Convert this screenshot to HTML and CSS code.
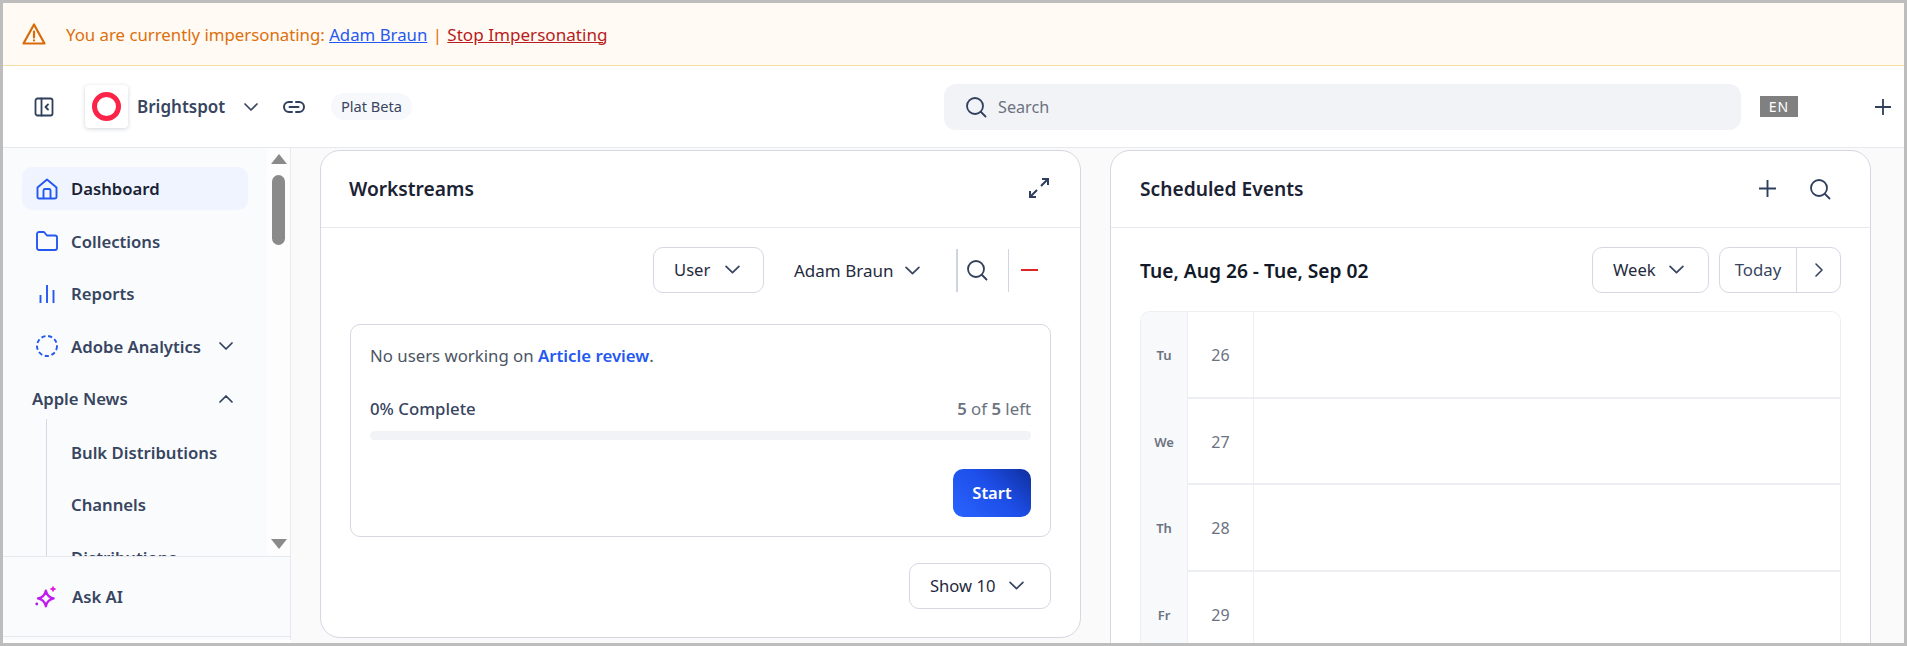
FILE: index.html
```html
<!DOCTYPE html>
<html lang="en">
<head>
<meta charset="utf-8">
<title>Dashboard</title>
<link rel="stylesheet" href="styles.css">
</head>
<body>
<div class="app">
  <div class="banner">
    <svg class="warn" viewBox="0 0 24 24" fill="none" stroke="#d96a0a" stroke-width="2.200" stroke-linejoin="round" stroke-linecap="round"><path d="M12 2.500 1.500 21.500h21L12 2.500Z"/><path d="M12 9.500v6M12 18.300v.1"/></svg>
    <span class="banner-text">You are currently impersonating: <a class="imp-user">Adam Braun</a> <span class="pipe">|</span> <a class="imp-stop">Stop Impersonating</a></span>
  </div>
  <header class="topbar">
    <svg class="toggle" viewBox="0 0 20 20" fill="none" stroke="#2f3f5c" stroke-width="1.800" stroke-linejoin="round" stroke-linecap="round"><rect x="1.500" y="1.500" width="17" height="17" rx="2"/><path d="M7.500 1.500v17M14 7.500 11.500 10l2.500 2.500"/></svg>
    <div class="logo"><span class="logo-ring"></span></div>
    <span class="brand">Brightspot</span>
    <svg class="chev brand-chev" viewBox="0 0 14 8" fill="none" stroke="#374560" stroke-width="1.700" stroke-linecap="round" stroke-linejoin="round"><path d="M1 1l6 6 6-6"/></svg>
    <svg class="link" viewBox="0 0 24 14" fill="none" stroke="#2f3f5c" stroke-width="2" stroke-linecap="round"><path d="M10 2H7a5 5 0 0 0 0 10h3M14 2h3a5 5 0 0 1 0 10h-3M7.500 7h9"/></svg>
    <span class="pill">Plat Beta</span>
    <div class="search">
      <svg class="search-ico" viewBox="0 0 22 22" fill="none" stroke="#2f3f5c" stroke-width="1.800" stroke-linecap="round"><circle cx="10" cy="10" r="8"/><path d="m16 16 4.500 4.500"/></svg>
      <span class="search-ph">Search</span>
    </div>
    <span class="lang">EN</span>
    <svg class="top-plus" viewBox="0 0 16 16" fill="none" stroke="#2f3f5c" stroke-width="1.800"><path d="M8 0v16M0 8h16"/></svg>
  </header>
  <div class="body">
    <aside class="sidebar">
      <div class="side-scroll">
        <nav class="nav">
          <div class="item active">
            <svg class="ico" viewBox="0 0 22 22" fill="none" stroke="#2458f0" stroke-width="1.900" stroke-linejoin="round"><path d="M1.500 9.500 11 1.500l9.500 8V19a1.500 1.500 0 0 1-1.500 1.500H3A1.500 1.500 0 0 1 1.500 19Z"/><path d="M7.500 20.500V12.500a1.500 1.500 0 0 1 1.500-1.500h4a1.500 1.500 0 0 1 1.500 1.500v8"/></svg>
            <span>Dashboard</span>
          </div>
          <div class="item">
            <svg class="ico" viewBox="0 0 22 20" fill="none" stroke="#2458f0" stroke-width="1.900" stroke-linejoin="round"><path d="M1 3a2 2 0 0 1 2-2h5l3 3.500h8a2 2 0 0 1 2 2V17a2 2 0 0 1-2 2H3a2 2 0 0 1-2-2Z"/></svg>
            <span>Collections</span>
          </div>
          <div class="item">
            <svg class="ico" viewBox="0 0 22 20" fill="none" stroke="#2458f0" stroke-width="1.900"><path d="M4.500 11v8M11 1v18M17.500 6v13"/></svg>
            <span>Reports</span>
          </div>
          <div class="item">
            <svg class="ico" viewBox="0 0 22 22" fill="none" stroke="#2458f0" stroke-width="1.900" stroke-dasharray="4.200 2.650"><circle cx="11" cy="11" r="10"/></svg>
            <span>Adobe Analytics</span>
            <svg class="chev side-chev" viewBox="0 0 14 8" fill="none" stroke="#2f3f5c" stroke-width="1.700" stroke-linecap="round" stroke-linejoin="round"><path d="M1 1l6 6 6-6"/></svg>
          </div>
          <div class="item group">
            <span>Apple News</span>
            <svg class="chev side-chev up" viewBox="0 0 14 8" fill="none" stroke="#2f3f5c" stroke-width="1.700" stroke-linecap="round" stroke-linejoin="round"><path d="M1 7l6-6 6 6"/></svg>
          </div>
          <div class="sub">
            <div class="item sub-item"><span>Bulk Distributions</span></div>
            <div class="item sub-item"><span>Channels</span></div>
            <div class="item sub-item"><span>Distributions</span></div>
          </div>
        </nav>
        <div class="track">
          <span class="arrow arrow-up"></span>
          <span class="thumb"></span>
          <span class="arrow arrow-down"></span>
        </div>
      </div>
      <div class="ask">
        <svg class="ask-ico" viewBox="0 0 22 22" fill="none"><path d="M9.500 5.500c.8 3.700 2.300 5.200 6 6-3.700.8-5.200 2.300-6 6-.8-3.700-2.300-5.200-6-6 3.700-.8 5.200-2.300 6-6Z" stroke="#c01cf0" stroke-width="1.800" stroke-linejoin="round" transform="translate(-1.500 -2.500) scale(1.300)"/><path d="M18 .5v5M15.500 3h5" stroke="#e81ce0" stroke-width="1.800"/><circle cx="1.800" cy="18" r="1.400" fill="#a01cf0"/></svg>
        <span>Ask AI</span>
      </div>
    </aside>
    <main class="main">
      <section class="card">
        <div class="card-head">
          <h2>Workstreams</h2>
          <svg class="expand" viewBox="0 0 22 22" fill="none" stroke="#2f3f5c" stroke-width="2"><path d="M14 2h6v6M20 2l-7 7M8 20H2v-6M2 20l7-7"/></svg>
        </div>
        <div class="ws-body">
          <div class="filters">
            <div class="select user-sel"><span>User</span><svg class="chev" viewBox="0 0 14 8" fill="none" stroke="#374560" stroke-width="1.600" stroke-linecap="round" stroke-linejoin="round"><path d="M1 1l6 6 6-6"/></svg></div>
            <div class="plain-sel"><span>Adam Braun</span><svg class="chev" viewBox="0 0 14 8" fill="none" stroke="#374560" stroke-width="1.600" stroke-linecap="round" stroke-linejoin="round"><path d="M1 1l6 6 6-6"/></svg></div>
            <div class="tool tool-search"><svg class="search-ico" viewBox="0 0 22 22" fill="none" stroke="#2f3f5c" stroke-width="1.800" stroke-linecap="round"><circle cx="10" cy="10" r="8"/><path d="m16 16 4.500 4.500"/></svg></div>
            <div class="tool tool-minus"><span class="minus"></span></div>
          </div>
          <div class="ws-item">
            <p class="ws-note">No users working on <a>Article review</a>.</p>
            <div class="progress-row"><span class="pct">0% Complete</span><span class="left"><b>5</b> of <b>5</b> left</span></div>
            <div class="bar"></div>
            <div class="ws-actions"><button class="start">Start</button></div>
          </div>
          <div class="ws-foot">
            <div class="select show-sel"><span>Show 10</span><svg class="chev" viewBox="0 0 14 8" fill="none" stroke="#374560" stroke-width="1.600" stroke-linecap="round" stroke-linejoin="round"><path d="M1 1l6 6 6-6"/></svg></div>
          </div>
        </div>
      </section>
      <section class="card card-events">
        <div class="card-head">
          <h2>Scheduled Events</h2>
          <div class="head-tools">
            <svg class="head-plus" viewBox="0 0 16 16" fill="none" stroke="#2f3f5c" stroke-width="1.800"><path d="M8 0v16M0 8h16"/></svg>
            <svg class="search-ico" viewBox="0 0 22 22" fill="none" stroke="#2f3f5c" stroke-width="1.800" stroke-linecap="round"><circle cx="10" cy="10" r="8"/><path d="m16 16 4.500 4.500"/></svg>
          </div>
        </div>
        <div class="ev-body">
          <div class="ev-toolbar">
            <h3>Tue, Aug 26 - Tue, Sep 02</h3>
            <div class="select week-sel"><span>Week</span><svg class="chev" viewBox="0 0 14 8" fill="none" stroke="#374560" stroke-width="1.600" stroke-linecap="round" stroke-linejoin="round"><path d="M1 1l6 6 6-6"/></svg></div>
            <div class="today-group">
              <span class="today">Today</span>
              <span class="next"><svg viewBox="0 0 8 14" fill="none" stroke="#374560" stroke-width="1.600" stroke-linecap="round" stroke-linejoin="round"><path d="m1 1 6 6-6 6"/></svg></span>
            </div>
          </div>
          <div class="calendar">
            <div class="cal-row"><span class="dow">Tu</span><span class="num">26</span><span class="slot"></span></div>
            <div class="cal-row"><span class="dow">We</span><span class="num">27</span><span class="slot"></span></div>
            <div class="cal-row"><span class="dow">Th</span><span class="num">28</span><span class="slot"></span></div>
            <div class="cal-row"><span class="dow">Fr</span><span class="num">29</span><span class="slot"></span></div>
          </div>
        </div>
      </section>
    </main>
  </div>
</div>
</body>
</html>
```
FILE: styles.css
```css
* { box-sizing: border-box; }
html, body { margin: 0; height: 646px; overflow: hidden; }
body { background: #bdbdbd; padding: 3px; font-family: "Noto Sans", "Liberation Sans", sans-serif; color: #374560; }
h2, h3, p { margin: 0; }
svg { display: block; flex: none; }

.app { height: 640px; background: #fff; display: flex; flex-direction: column; overflow: hidden; }

.banner { height: 63px; flex: none; background: #fffbf4; border-bottom: 1px solid #f5e0a0; display: flex; align-items: center; padding: 0 0 0 19px; }
.warn { width: 24px; height: 24px; margin-right: 20px; }
.banner-text { font-size: 16.8px; color: #dd6f0c; }
.imp-user { color: #2458f0; text-decoration: underline; }
.imp-stop { color: #b91c1c; text-decoration: underline; font-size: 17.1px; }
.pipe { margin: 0 1px; }

.topbar { height: 82px; flex: none; border-bottom: 1px solid #e7e9ee; display: flex; align-items: center; position: relative; padding-left: 31px; }
.toggle { width: 20px; height: 20px; margin-right: 31px; }
.logo { width: 43px; height: 43px; border-radius: 4px; background: #fff; box-shadow: 0 1px 4px rgba(30, 40, 60, .2); display: flex; align-items: center; justify-content: center; margin-right: 9px; }
.logo-ring { width: 29px; height: 29px; border: 5px solid #fb2347; border-radius: 50%; }
.brand { font-size: 17px; font-weight: 600; color: #374560; width: 107px; }
.brand-chev { width: 14px; height: 8px; margin-right: 24px; }
.link { width: 24px; height: 14px; margin-right: 25px; }
.pill { height: 27px; border-radius: 14px; background: #f7f8fb; font-size: 14.6px; line-height: 27px; color: #374560; width: 81px; white-space: nowrap; text-align: center; }
.search { margin-left: 532px; width: 797px; height: 46px; background: #f2f3f7; border-radius: 12px; display: flex; align-items: center; padding-left: 21px; }
.search-ico { width: 22px; height: 22px; }
.search-ph { margin-left: 11px; font-size: 16.2px; color: #6b7280; }
.lang { margin-left: 19px; width: 38px; height: 21px; background: #808080; color: #fff; font-size: 14px; line-height: 21px; text-align: center; letter-spacing: 1px; }
.top-plus { width: 16px; height: 16px; margin-left: 77px; }

.body { flex: 1; min-height: 0; display: flex; }

.sidebar { width: 288px; flex: none; background: #fafbfd; border-right: 1px solid #e7e9ee; display: flex; flex-direction: column; height: 492px; }
.side-scroll { height: 408px; flex: none; display: flex; overflow: hidden; }
.nav { flex: 1; min-width: 0; padding: 19px 19px 0 19px; overflow: hidden; }
.track { width: 23px; flex: none; background: #fdfdfd; display: flex; flex-direction: column; align-items: center; padding-top: 6px; }
.arrow { width: 0; height: 0; border-left: 8px solid transparent; border-right: 8px solid transparent; }
.arrow-up { border-bottom: 10px solid #8a8a8a; }
.arrow-down { border-top: 10px solid #8a8a8a; margin-top: 294px; }
.thumb { width: 13px; height: 70px; margin-top: 11px; background: #8a8a8a; border-radius: 7px; }

.item { height: 43px; margin-bottom: 9.5px; padding-left: 14px; border-radius: 10px; display: flex; align-items: center; font-size: 16.7px; font-weight: 600; color: #374560; white-space: nowrap; }
.item.active { background: #eff4ff; color: #1a2233; }
.ico { width: 22px; height: 22px; margin-right: 13px; }
.side-chev { width: 14px; height: 8px; margin-left: 18px; }
.group { padding-left: 10px; }
.group .side-chev { margin-left: 91px; }
.sub { border-left: 1px solid #d5d9e3; margin: -11px 0 0 24px; padding-top: 12px; }
.sub .item { padding-left: 24px; }
.chev { width: 14px; height: 8px; }

.ask { height: 81px; flex: none; border-top: 1px solid #e7e9ee; border-bottom: 1px solid #e7e9ee; display: flex; align-items: center; padding-left: 32px; font-size: 16.7px; font-weight: 600; color: #374560; }
.ask-ico { width: 22px; height: 22px; margin-right: 15px; }

.main { flex: 1; min-width: 0; background: #fafafa; display: grid; grid-template-columns: 761px 761px; column-gap: 29px; padding: 2px 0 0 29px; align-items: start; overflow: hidden; }
.card { height: 488px; background: #fff; border: 1px solid #d5d8e3; border-radius: 20px; }
.card-events { height: 600px; }
.card-head { height: 77px; border-bottom: 1px solid #e7e9ee; display: flex; align-items: center; justify-content: space-between; padding: 0 30px 2px 28px; }
.card-events .card-head { padding: 0 39px 1px 29px; }
h2 { font-size: 19.2px; font-weight: 600; color: #1a2233; }
.expand { width: 22px; height: 22px; }
.head-tools { display: flex; align-items: center; gap: 33px; }
.head-plus { width: 17px; height: 17px; }

.ws-body { padding: 19px 29px 0 29px; }
.select { height: 46px; border: 1px solid #d5d8e3; border-radius: 10px; background: #fff; display: flex; align-items: center; font-size: 16.6px; color: #1f2a3d; padding-bottom: 1px; }
.filters { display: flex; align-items: center; height: 46px; padding-left: 303px; }
.user-sel { width: 111px; padding-left: 20px; gap: 15px; }
.plain-sel { display: flex; align-items: center; gap: 12px; margin-left: 30px; font-size: 17px; color: #1f2a3d; width: 162px; }
.plain-sel .chev, .user-sel .chev { width: 15px; height: 9px; }
.tool { height: 43px; display: flex; align-items: center; }
.tool-search { width: 52px; border-left: 2px solid #d0d4df; padding-left: 8px; }
.tool-minus { border-left: 1px solid #d0d4df; padding-left: 12px; }
.minus { width: 17px; height: 2px; background: #dc2626; }

.ws-item { height: 213px; margin-top: 31px; border: 1px solid #d5d8e3; border-radius: 10px; padding: 0 19px; }
.ws-note { font-size: 16.8px; line-height: 20px; padding-top: 21px; color: #4b5563; }
.ws-note a { color: #2458f0; font-weight: 600; }
.progress-row { display: flex; justify-content: space-between; margin-top: 33px; font-size: 16.8px; line-height: 20px; }
.pct { color: #374560; font-weight: 500; }
.left { color: #6b7280; }
.left b { font-weight: 600; }
.bar { height: 9px; border-radius: 5px; background: #f2f3f7; margin-top: 12px; }
.ws-actions { display: flex; justify-content: flex-end; margin-top: 29px; }
.start { width: 78px; height: 48px; border: 0; border-radius: 10px; padding: 0 0 2px; background: linear-gradient(45deg, #2a63ff 0%, #1d4ee8 55%, #0f2f9e 100%); color: #fff; font: 600 16.5px "Noto Sans", sans-serif; }
.ws-foot { display: flex; justify-content: flex-end; margin-top: 26px; }
.show-sel { width: 142px; padding-left: 20px; gap: 14px; }
.show-sel .chev { width: 15px; height: 9px; }

.ev-body { padding: 19px 29px 0 29px; }
.ev-toolbar { display: flex; align-items: center; height: 46px; }
h3 { font-size: 19.2px; font-weight: 600; color: #111827; flex: 1; white-space: nowrap; }
.week-sel { width: 117px; padding-left: 20px; gap: 13px; }
.week-sel .chev { width: 15px; height: 9px; }
.today-group { margin-left: 10px; width: 122px; height: 46px; border: 1px solid #d5d8e3; border-radius: 10px; display: flex; font-size: 16.8px; }
.today { width: 77px; border-right: 1px solid #d5d8e3; display: flex; align-items: center; justify-content: center; color: #374560; padding-bottom: 1px; }
.next { flex: 1; display: flex; align-items: center; justify-content: center; }
.next svg { width: 8px; height: 14px; }

.calendar { margin-top: 18px; border: 1px solid #eceef2; border-bottom: 0; border-radius: 10px 10px 0 0; overflow: hidden; }
.cal-row { height: 86.5px; display: flex; background: #f8f9fb; }
.dow { width: 46px; flex: none; display: flex; align-items: center; justify-content: center; font-size: 13px; font-weight: 600; color: #6b7280; }
.num { width: 66px; flex: none; background: #fff; border-left: 1px solid #eceef2; border-bottom: 2px solid #eceef2; display: flex; align-items: center; justify-content: center; font-size: 16px; color: #6b7280; padding-top: 2px; }
.slot { flex: 1; background: #fff; border-left: 1px solid #eceef2; border-bottom: 2px solid #eceef2; }
```
